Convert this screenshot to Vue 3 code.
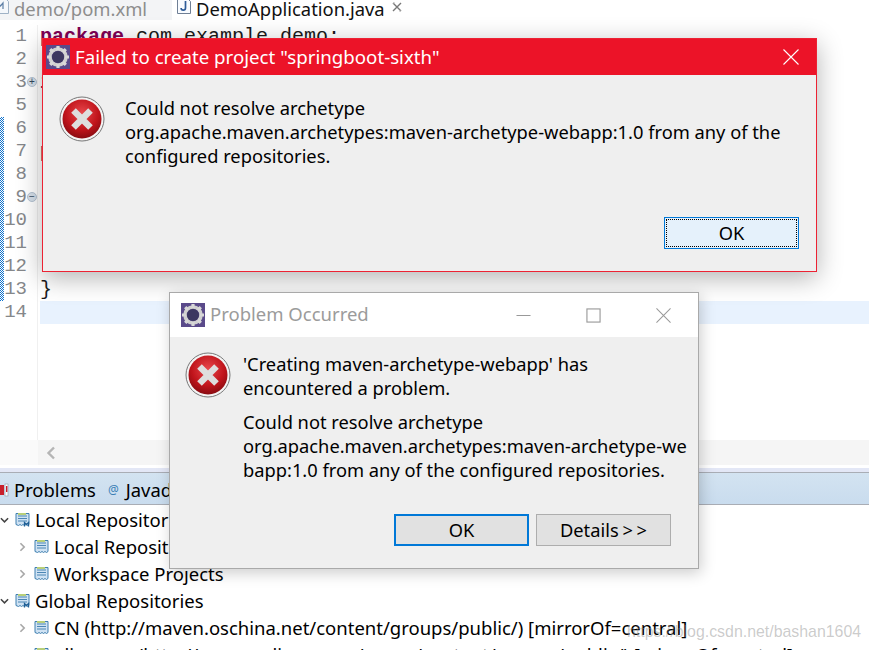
<script setup>
const lineNumbers = [1, 2, 3, 5, 6, 7, 8, 9, 10, 11, 12, 13, 14]
const foldMarks = { 3: '+', 9: '−' }
const tree = [
  { label: 'Local Repositories', level: 0, open: true },
  { label: 'Local Repository', level: 1 },
  { label: 'Workspace Projects', level: 1 },
  { label: 'Global Repositories', level: 0, open: true },
  { label: 'CN (http://maven.oschina.net/content/groups/public/) [mirrorOf=central]', level: 1 },
  { label: 'alimaven (http://maven.aliyun.com/nexus/content/groups/public/) [mirrorOf=central]', level: 1 }
]
</script>

<template>
  <div class="screen">
    <header class="tabs">
      <div class="tab muted">
        <svg class="file" viewBox="0 0 14 16"><path d="M.5.5h10l3 3v12H.5z" fill="#f4f7fb" stroke="#9fb2c6"/><path d="M3 11V5l2.500 3L8 5v6" fill="none" stroke="#5d7fa6" stroke-width="1.200"/></svg>
        <span>demo/pom.xml</span>
      </div>
      <div class="tab active">
        <svg class="file" viewBox="0 0 14 16"><path d="M.5.5h10l3 3v12H.5z" fill="#f8fbff" stroke="#6f7f95"/><path d="M8.500 3v7a2.200 2.200 0 0 1-4.400 0" fill="none" stroke="#2e5c99" stroke-width="1.700"/></svg>
        <span>DemoApplication.java</span>
        <svg class="tab-close" viewBox="0 0 10 10"><path d="M1 1l8 8M9 1l-8 8" stroke="#777" stroke-width="1.400"/><path d="M1 1h2M7 9h2" stroke="#bbb"/></svg>
      </div>
    </header>

    <section class="editor">
      <div class="overview"></div>
      <div class="gutter">
        <div v-for="n in lineNumbers" :key="n" class="num">
          {{ n }}
          <i v-if="foldMarks[n]" class="fold">{{ foldMarks[n] }}</i>
        </div>
      </div>
      <div class="code">
        <div class="line"><b>package</b> com.example.demo;</div>
        <div class="line"></div>
        <div class="line"><b>import</b></div>
        <div class="line"></div>
        <div class="line"></div>
        <div class="line"><b>public</b></div>
        <div class="line"></div>
        <div class="line"></div>
        <div class="line"></div>
        <div class="line"></div>
        <div class="line"></div>
        <div class="line">}</div>
        <div class="line current"></div>
      </div>
    </section>

    <div class="hscroll">
      <div class="hscroll-corner"></div>
      <div class="hscroll-track">
        <svg viewBox="0 0 10 14" class="chev"><path d="M8 1.500L2.500 7 8 12.500" fill="none" stroke="#b5b5b5" stroke-width="2.400"/></svg>
      </div>
    </div>

    <section class="panel">
      <div class="panel-tabs">
        <svg class="prob-icon" viewBox="0 0 10 16"><rect x="-2" y="3" width="6" height="10" fill="#c8202c"/><rect x="5" y="2" width="3" height="12" fill="#fff" stroke="#8894a5" stroke-width=".6"/><rect x="6" y="4" width="1.400" height="6" fill="#c8202c"/></svg>
        <span class="panel-tab">Problems</span>
        <span class="at">@</span>
        <span class="panel-tab">Javadoc</span>
      </div>
      <ul class="tree">
        <li v-for="row in tree" :key="row.label" class="row" :class="{ nested: row.level }">
          <svg v-if="row.open" class="twist" viewBox="0 0 10 10"><path d="M1 3l4 4 4-4" fill="none" stroke="#444" stroke-width="1.700"/></svg>
          <svg v-else class="twist" viewBox="0 0 10 12"><path d="M2.500 1.500L7 6l-4.500 4.500" fill="none" stroke="#a8a8a8" stroke-width="2"/></svg>
          <svg class="repo" viewBox="0 0 15 15">
            <path d="M1 1.500h13v11l-1.500 1-1.500-1-1.500 1-1.500-1-1.500 1-1.500-1-1.500 1L1 12.500z" fill="#cfe2f3" stroke="#3f7fb0"/>
            <path d="M3 4h9M3 6.500h9M3 9h9" stroke="#4b86b4"/>
            <rect x="3" y="1" width="8" height="2" fill="#b8cf7a"/>
            <path v-if="row.open" d="M9.500 14.500v-4l2 2 2-2v4" fill="none" stroke="#1f5f96" stroke-width="1.300"/>
          </svg>
          <span>{{ row.label }}</span>
        </li>
      </ul>
    </section>

    <div class="dialog error-dialog">
      <div class="title red">
        <svg class="gear" viewBox="0 0 24 24">
          <rect width="24" height="24" fill="#5a4a8a"/>
          <circle cx="12" cy="12" r="8" fill="none" stroke="#cfcfcf" stroke-width="3.600"/>
          <path d="M12 1v4M12 19v4M1 12h4M19 12h4M4.200 4.200l2.800 2.800M17 17l2.800 2.800M19.800 4.200L17 7M7 17l-2.800 2.800" stroke="#d8d8d8" stroke-width="3.200"/>
          <circle cx="12" cy="12" r="6" fill="#3c3760"/>
        </svg>
        <span class="title-text">Failed to create project "springboot-sixth"</span>
        <svg class="win-x" viewBox="0 0 16 16"><path d="M.5.5l15 15M15.500.5l-15 15" stroke="#fff" stroke-width="1.100"/></svg>
      </div>
      <div class="body one">
        <svg class="err" viewBox="0 0 46 46">
          <defs>
            <radialGradient id="redA" cx=".5" cy=".35" r=".7"><stop offset="0" stop-color="#e8474c"/><stop offset=".6" stop-color="#c0141b"/><stop offset="1" stop-color="#7d0a10"/></radialGradient>
          </defs>
          <circle cx="23" cy="23" r="22" fill="#f4f4f4" stroke="#777"/>
          <circle cx="23" cy="23" r="19.500" fill="url(#redA)"/>
          <path d="M14.500 14.500l17 17M31.500 14.500l-17 17" stroke="#dedede" stroke-width="6.500"/>
        </svg>
        <p class="msg">Could not resolve archetype<br>org.apache.maven.archetypes:maven-archetype-webapp:1.0 from any of the<br>configured repositories.</p>
      </div>
      <div class="actions one-actions">
        <button class="btn focused"><span class="dots">OK</span></button>
      </div>
    </div>

    <div class="dialog problem-dialog">
      <div class="title plain">
        <svg class="gear" viewBox="0 0 24 24">
          <rect width="24" height="24" fill="#5a4a8a"/>
          <circle cx="12" cy="12" r="8" fill="none" stroke="#cfcfcf" stroke-width="3.600"/>
          <path d="M12 1v4M12 19v4M1 12h4M19 12h4M4.200 4.200l2.800 2.800M17 17l2.800 2.800M19.800 4.200L17 7M7 17l-2.800 2.800" stroke="#d8d8d8" stroke-width="3.200"/>
          <circle cx="12" cy="12" r="6" fill="#3c3760"/>
        </svg>
        <span class="title-text">Problem Occurred</span>
        <div class="win-btns">
          <svg viewBox="0 0 16 16"><path d="M.5 8h15" stroke="#999" stroke-width="1.100"/></svg>
          <svg viewBox="0 0 16 16"><rect x="1" y="1" width="14" height="14" fill="none" stroke="#999" stroke-width="1.200"/></svg>
          <svg viewBox="0 0 16 16"><path d="M.5.5l15 15M15.500.5l-15 15" stroke="#999" stroke-width="1.100"/></svg>
        </div>
      </div>
      <div class="body two">
        <svg class="err" viewBox="0 0 46 46">
          <circle cx="23" cy="23" r="22" fill="#f4f4f4" stroke="#777"/>
          <circle cx="23" cy="23" r="19.500" fill="url(#redA)"/>
          <path d="M14.500 14.500l17 17M31.500 14.500l-17 17" stroke="#dedede" stroke-width="6.500"/>
        </svg>
        <div>
          <p class="msg">'Creating maven-archetype-webapp' has<br>encountered a problem.</p>
          <p class="msg second">Could not resolve archetype<br>org.apache.maven.archetypes:maven-archetype-we<br>bapp:1.0 from any of the configured repositories.</p>
        </div>
      </div>
      <div class="actions two-actions">
        <button class="btn primary">OK</button>
        <button class="btn details">Details &gt; &gt;</button>
      </div>
    </div>

    <div class="watermark">https://blog.csdn.net/bashan1604</div>
  </div>
</template>

<style scoped>
.screen {
  position: relative;
  width: 869px;
  height: 650px;
  overflow: hidden;
  background: #fff;
  display: flex;
  flex-direction: column;
  font-family: "Noto Sans", "Open Sans", sans-serif;
  font-size: 18.3px;
  color: #000;
}
p, ul { margin: 0; padding: 0; }
ul { list-style: none; }

/* Editor tabs */
.tabs {
  height: 25px;
  display: flex;
  align-items: flex-start;
  overflow: hidden;
  flex: none;
  background: #fff;
}
.tab {
  height: 23px;
  display: flex;
  align-items: flex-start;
  gap: 5px;
  white-space: nowrap;
  line-height: 18px;
  font-size: 18.4px;
}
.tab.muted { width: 177px; height: 20px; color: #8d8d8d; margin-left: -5px; background: #f3f4f6; }
.tab.active { background: #fff; width: 240px; padding-left: 5px; box-sizing: border-box; color: #111; }
.file { width: 14px; height: 16px; flex: none; margin-top: -2px; }
.tab-close { width: 10px; height: 10px; margin-left: 2px; margin-top: 2px; }

/* Editor */
.editor {
  height: 415px;
  flex: none;
  display: flex;
  font-family: "Liberation Mono", monospace;
  font-size: 20px;
  background: #fff;
}
.overview {
  width: 4px;
  flex: none;
  margin-top: 92px;
  height: 184px;
  background: repeating-conic-gradient(#1173cc 0 25%, #fff 0 50%) 0 0 / 2px 2px;
}
.gutter {
  width: 34px;
  flex: none;
  box-sizing: border-box;
  background: #fff;
  border-right: 1px solid #f0f0f0;
  font-size: 19px;
}
.num {
  position: relative;
  height: 23px;
  line-height: 23px;
  text-align: right;
  padding-right: 10px;
  color: #85878a;
}
.fold {
  position: absolute;
  right: 0;
  top: 6px;
  width: 10px;
  height: 10px;
  border-radius: 50%;
  background: #d5dfe9;
  border: 1px solid #b4c2d2;
  box-sizing: border-box;
  font: 10px/8px "Liberation Sans", sans-serif;
  text-align: center;
  color: #34495e;
}
.code { flex: 1; min-width: 0; padding-left: 2px; }
.line {
  height: 23px;
  line-height: 23px;
  white-space: pre;
  color: #1a1a1a;
}
.line b { color: #7f0055; }
.line.current { background: #e8f2fe; }

.hscroll { height: 25px; flex: none; display: flex; }
.hscroll-corner { width: 38px; background: #fafafa; }
.hscroll-track { flex: 1; background: #f5f5f5; padding: 6px 0 0 8px; }
.chev { display: block; width: 10px; height: 14px; }

/* Bottom panel */
.panel {
  margin-top: 3px;
  flex: 1;
  min-height: 0;
  border-top: 4px solid #e3e7f6;
}
.panel-tabs {
  height: 33px;
  box-sizing: border-box;
  border-top: 1px solid #a9adb5;
  border-bottom: 1px solid #a9adb5;
  background: linear-gradient(#d3e3f1, #c9dcee);
  display: flex;
  align-items: center;
  white-space: nowrap;
  padding-top: 2px;
}
.prob-icon { width: 10px; height: 16px; margin-right: 4px; flex: none; }
.panel-tab { line-height: 20px; font-size: 18.4px; }
.at { color: #3b7fb6; font-size: 12px; margin: 0 7px 0 12px; }
.tree { padding-top: 1px; font-size: 18.5px; }
.row {
  height: 27px;
  display: flex;
  align-items: center;
  white-space: nowrap;
}
.row.nested { padding-left: 18px; }
.twist { width: 9px; height: 10px; margin-right: 6px; flex: none; }
.repo { width: 15px; height: 15px; margin-right: 5px; flex: none; }
.row.nested .repo { margin-left: 1px; }

/* Dialogs: floating windows on the desktop */
.dialog {
  position: absolute;
  box-sizing: border-box;
  background: #efefef;
  display: flex;
  flex-direction: column;
}
.error-dialog {
  left: 42px;
  top: 38px;
  width: 775px;
  height: 234px;
  border: 1px solid #ec2233;
  box-shadow: 0 6px 24px rgba(0, 0, 0, .3);
}
.problem-dialog {
  left: 169px;
  top: 292px;
  width: 530px;
  height: 277px;
  border: 1px solid #a9a9a9;
  box-shadow: 2px 4px 14px rgba(0, 0, 0, .2);
}
.title {
  flex: none;
  display: flex;
  align-items: center;
  white-space: nowrap;
  font-size: 18.7px;
}
.title.red {
  height: 36px;
  background: #ec1328;
  color: #fff;
  padding-left: 3px;
}
.title.plain {
  height: 44px;
  background: #fff;
  color: #9b9b9b;
  padding-left: 11px;
  font-size: 18.5px;
}
.title.plain .title-text { margin-top: -2px; }
.gear { width: 24px; height: 24px; flex: none; margin-right: 5px; }
.title-text { flex: 1; line-height: 24px; }
.win-x { width: 16px; height: 16px; margin-right: 17px; flex: none; }
.win-btns { display: flex; gap: 55px; margin-right: 27px; }
.win-btns svg { width: 15px; height: 15px; display: block; }

.body { display: flex; flex: 1; }
.body.one { padding: 21px 0 0 16px; gap: 20px; }
.body.two { padding: 15px 0 0 15px; gap: 12px; }
.err { width: 46px; height: 46px; flex: none; }
.msg { line-height: 24px; white-space: nowrap; color: #000; }
.msg.second { margin-top: 10px; }

.actions { display: flex; flex: none; justify-content: flex-end; }
.one-actions { padding: 0 17px 22px 0; }
.two-actions { padding: 0 27px 22px 0; gap: 7px; }
.btn {
  width: 135px;
  height: 32px;
  padding: 0;
  box-sizing: border-box;
  background: #e1e1e1;
  border: 1px solid #adadad;
  font: inherit;
  line-height: 24px;
  color: #000;
}
.btn.details { word-spacing: -1px; }
.btn.primary { border: 2px solid #0078d7; }
.btn.focused {
  background: #e5f1fb;
  border: 1px solid #0078d7;
  padding: 1px;
}
.dots {
  display: block;
  height: 100%;
  box-sizing: border-box;
  border: 1px dotted #000;
  line-height: 26px;
}

.watermark {
  position: absolute;
  left: 627px;
  top: 622px;
  font-family: "Liberation Sans", sans-serif;
  font-size: 15.9px;
  line-height: 20px;
  color: rgba(140, 140, 140, .45);
  white-space: nowrap;
}
</style>
